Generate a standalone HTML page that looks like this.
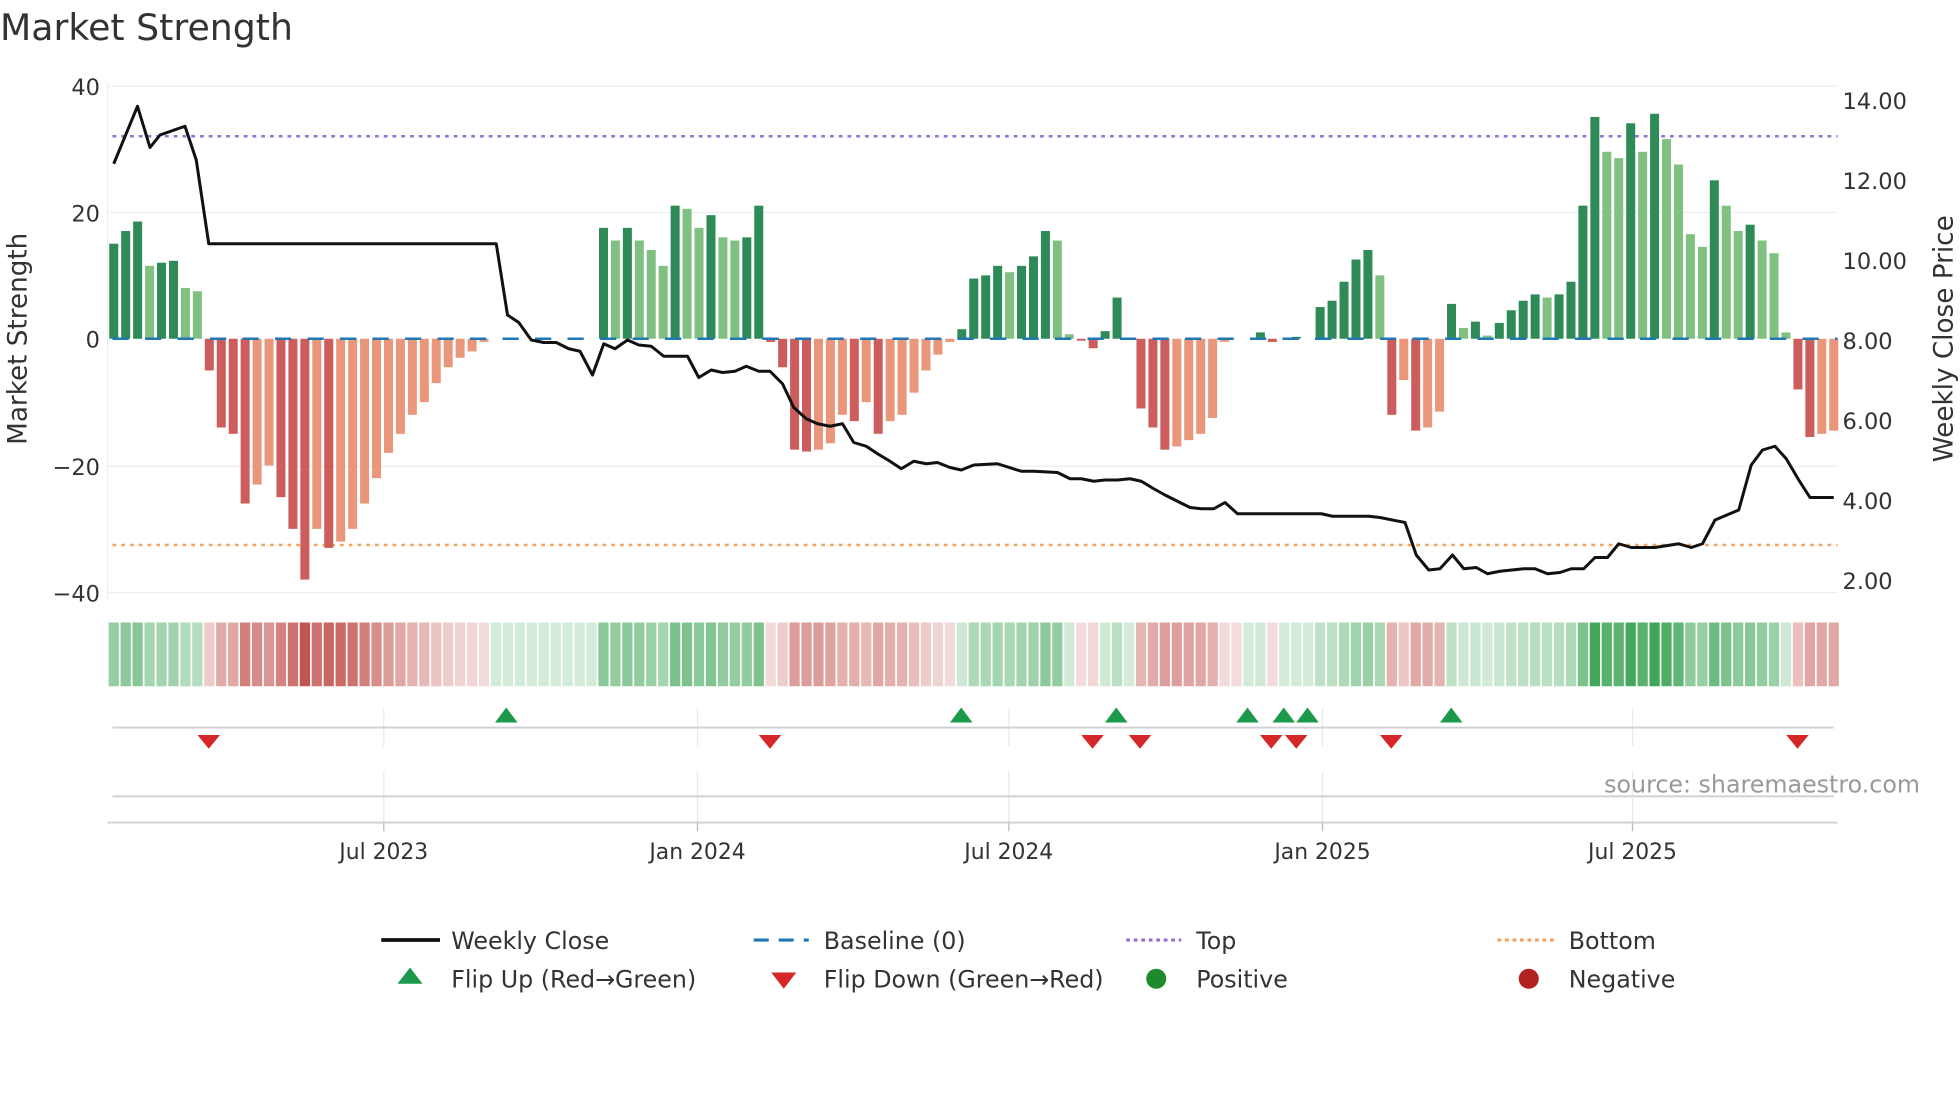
<!DOCTYPE html>
<html><head><meta charset="utf-8"><style>
html,body{margin:0;padding:0;background:#fff;width:1960px;height:1102px;overflow:hidden}
svg{display:block}
text{font-family:"DejaVu Sans","Liberation Sans",sans-serif;fill:#333}
</style></head><body>
<svg id="s" width="1960" height="1102" viewBox="0 0 1568 881.6" xmlns="http://www.w3.org/2000/svg">
<text x="0" y="32" font-size="29" fill="#333">Market Strength</text>
<g stroke="#eceef3" stroke-width="1">
<line x1="86" y1="69" x2="1470" y2="69"/><line x1="86" y1="170" x2="1470" y2="170"/>
<line x1="86" y1="373" x2="1470" y2="373"/><line x1="86" y1="474" x2="1470" y2="474"/>
<line x1="86" y1="66" x2="86" y2="480"/>
</g>
<g font-size="18" text-anchor="end">
<text x="80" y="76">40</text><text x="80" y="177">20</text><text x="80" y="278">0</text>
<text x="80" y="380">−20</text><text x="80" y="481">−40</text>
</g>
<g font-size="18">
<text x="1474" y="87">14.00</text><text x="1474" y="151">12.00</text><text x="1474" y="215">10.00</text>
<text x="1474" y="279">8.00</text><text x="1474" y="343">6.00</text><text x="1474" y="407">4.00</text>
<text x="1474" y="471">2.00</text>
</g>
<text font-size="21" text-anchor="middle" transform="translate(21,271) rotate(-90)">Market Strength</text>
<text font-size="21" text-anchor="middle" transform="translate(1562,271) rotate(-90)">Weekly Close Price</text>
<line x1="90" y1="109" x2="1470" y2="109" stroke="#9370db" stroke-width="2" stroke-dasharray="3,4"/>
<line x1="90" y1="436" x2="1470" y2="436" stroke="#f4a460" stroke-width="2" stroke-dasharray="3,4"/>
<g id="bars"></g>
<line x1="90" y1="271" x2="1470" y2="271" stroke="#1f77b4" stroke-width="2" stroke-dasharray="13,13"/>
<polyline fill="none" stroke="#111" stroke-width="2.4" stroke-linejoin="round" points="91,131 110,85 120,118 128,108 148,101 157,128 167,195 397,195 406,252 415,258 425,272 435,274 445,274 455,279 464,281 474,300 483,275 492,279 502,272 511,276 521,277 531,285 550,285 559,302 569,296 578,298 588,297 597,293 607,297 616,297 626,307 635,326 645,335 654,339 664,341 674,339 683,354 693,357 702,363 712,369 721,375 731,369 741,371 750,370 760,374 769,376 779,372 798,371 817,377 827,377 846,378 856,383 865,383 875,385 884,384 894,384 904,383 913,385 923,391 932,396 942,401 952,406 961,407 971,407 980,402 990,411 1009,411 1057,411 1066,413 1095,413 1104,414 1124,418 1133,444 1143,456 1152,455 1162,444 1171,455 1181,454 1190,459 1200,457 1219,455 1228,455 1238,459 1248,458 1257,455 1267,455 1276,446 1286,446 1295,435 1305,438 1324,438 1343,435 1353,438 1362,435 1372,416 1391,408 1401,372 1410,360 1420,357 1429,367 1439,384 1448,398 1467,398"/>
<g id="heat"></g>
<g stroke="#e8eaf0" stroke-width="1">
<line x1="307" y1="567" x2="307" y2="597"/><line x1="558" y1="567" x2="558" y2="597"/><line x1="807" y1="567" x2="807" y2="597"/><line x1="1058" y1="567" x2="1058" y2="597"/><line x1="1306" y1="567" x2="1306" y2="597"/>
<line x1="307" y1="617" x2="307" y2="658"/><line x1="558" y1="617" x2="558" y2="658"/><line x1="807" y1="617" x2="807" y2="658"/><line x1="1058" y1="617" x2="1058" y2="658"/><line x1="1306" y1="617" x2="1306" y2="658"/>
</g>
<line x1="90" y1="582" x2="1467" y2="582" stroke="#cfcfd6" stroke-width="1.5"/>
<line x1="90" y1="637" x2="1467" y2="637" stroke="#cfcfd6" stroke-width="1.5"/>
<line x1="86" y1="658" x2="1470" y2="658" stroke="#cfcfd6" stroke-width="1.5"/>
<g stroke="#bbb"><line x1="307" y1="658" x2="307" y2="665"/><line x1="558" y1="658" x2="558" y2="665"/><line x1="807" y1="658" x2="807" y2="665"/><line x1="1058" y1="658" x2="1058" y2="665"/><line x1="1306" y1="658" x2="1306" y2="665"/></g>
<g id="flips"></g>
<text x="1536" y="634" font-size="19" text-anchor="end" style="fill:#999">source: sharemaestro.com</text>
<g font-size="17.5" text-anchor="middle">
<text x="307" y="687">Jul 2023</text><text x="558" y="687">Jan 2024</text><text x="807" y="687">Jul 2024</text><text x="1058" y="687">Jan 2025</text><text x="1306" y="687">Jul 2025</text>
</g>
<g font-size="19">
<line x1="305" y1="752" x2="352" y2="752" stroke="#111" stroke-width="3"/><text x="361" y="759">Weekly Close</text>
<line x1="603" y1="752" x2="647" y2="752" stroke="#1f77b4" stroke-width="2.5" stroke-dasharray="12,8"/><text x="659" y="759">Baseline (0)</text>
<line x1="901" y1="752" x2="945" y2="752" stroke="#9370db" stroke-width="2.5" stroke-dasharray="3,3"/><text x="957" y="759">Top</text>
<line x1="1198" y1="752" x2="1243" y2="752" stroke="#f4a460" stroke-width="2.5" stroke-dasharray="3,3"/><text x="1255" y="759">Bottom</text>
<polygon points="328,774 338,787 318,787" fill="#1a9a4a"/><text x="361" y="790">Flip Up (Red→Green)</text>
<polygon points="617,778 637,778 627,791" fill="#d62728"/><text x="659" y="790">Flip Down (Green→Red)</text>
<circle cx="925" cy="783" r="8" fill="#1e8a2e"/><text x="957" y="790">Positive</text>
<circle cx="1223" cy="783" r="8" fill="#b22222"/><text x="1255" y="790">Negative</text>
</g>
</svg>
<script>
var v=[15,17,18.5,11.5,12,12.3,8,7.5,
-5,-14,-15,-26,-23,-20,-25,-30,-38,-30,-33,-32,-30,-26,-22,-18,-15,-12,-10,-7,-4.5,-3,-2,-0.5,
0.2,0.2,0.2,0.2,0.2,0.2,0.2,0.2,0.2,
17.5,15.5,17.5,15.5,14,11.5,21,20.5,17.5,19.5,16,15.5,16,21,
-0.5,-4.5,-17.5,-17.8,-17.5,-16.5,-12,-13,-10,-15,-13,-12,-8.5,-5,-2.5,-0.5,
1.5,9.5,10,11.5,10.5,11.5,13,17,15.5,0.7,-0.3,-1.5,1.2,6.5,0.2,-11,-14,-17.5,-17,-16,-15,-12.5,-0.5,-0.2,0.1,1,-0.5,0.1,0.3,0.1,5,6,9,12.5,14,10,-12,-6.5,-14.5,-14,-11.5,5.5,1.7,2.7,0.5,2.5,4.5,6,7,6.5,7,9,21,35,29.5,28.5,34,29.5,35.5,31.5,27.5,16.5,14.5,25,21,17,18,15.5,13.5,1,-8,-15.5,-15,-14.5];
var NS="http://www.w3.org/2000/svg",b=document.getElementById("bars"),h=document.getElementById("heat"),f=document.getElementById("flips");
function el(p,t,a){var e=document.createElementNS(NS,t);for(var k in a)e.setAttribute(k,a[k]);p.appendChild(e);return e;}
var u=5.07,prev=0,sp=(1467-91)/(v.length-1);
for(var i=0;i<v.length;i++){var x=91+i*sp,val=v[i],c;
if(val>=0)c=(val>prev)?"#2e8b57":"#80c080";else c=(val<prev)?"#cd5c5c":"#e9967a";
var y0=271,y1=271-val*u;
if(Math.abs(val)>0.25)el(b,"rect",{x:x-3.6,y:Math.min(y0,y1),width:7.2,height:Math.abs(y1-y0),fill:c});
var a=0.22+Math.min(Math.abs(val),36)/36*0.78;
var hc=val>=0?"rgba(60,165,85,"+a+")":"rgba(195,85,80,"+(0.2+Math.min(Math.abs(val),38)/38*0.8)+")";
el(h,"rect",{x:x-4.1,y:498,width:8.2,height:51,fill:hc});
prev=val;}
[405,769,893,998,1027,1046,1161].forEach(function(x){el(f,"polygon",{points:(x)+",566 "+(x+9)+",578 "+(x-9)+",578",fill:"#1a9a4a"});});
[167,616,874,912,1017,1037,1113,1438].forEach(function(x){el(f,"polygon",{points:(x-9)+",588 "+(x+9)+",588 "+x+",599",fill:"#d62728"});});
</script>
</body></html>
